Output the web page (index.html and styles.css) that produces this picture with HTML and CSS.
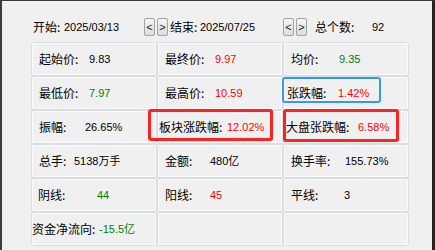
FILE: index.html
```html
<!DOCTYPE html>
<html lang="zh-CN">
<head>
<meta charset="utf-8">
<title>统计</title>
<link rel="stylesheet" href="styles.css">
</head>
<body>
<div class="win">
  <div class="bar">
    <div class="grp g1"><span class="lab lw-date">开始:</span><span class="val">2025/03/13</span></div>
    <div class="nav"><button class="btn">&lt;</button><button class="btn">&gt;</button></div>
    <div class="grp g2"><span class="lab lw-date2">结束:</span><span class="val">2025/07/25</span></div>
    <div class="nav"><button class="btn">&lt;</button><button class="btn">&gt;</button></div>
    <div class="grp g3"><span class="lab lw-count">总个数:</span><span class="val">92</span></div>
  </div>
  <div class="grid">
    <div class="cell"><span class="lab w50">起始价:</span><span class="val">9.83</span></div>
    <div class="cell"><span class="lab w50">最终价:</span><span class="val up">9.97</span></div>
    <div class="cell"><span class="lab w48">均价:</span><span class="val down">9.35</span></div>

    <div class="cell"><span class="lab w50">最低价:</span><span class="val down">7.97</span></div>
    <div class="cell"><span class="lab w50">最高价:</span><span class="val up">10.59</span></div>
    <div class="cell p3"><span class="lab w51">张跌幅:</span><span class="val up">1.42%</span><span class="hl hl-blue"></span></div>

    <div class="cell"><span class="lab w46">振幅:</span><span class="val">26.65%</span></div>
    <div class="cell p1"><span class="lab w68">板块涨跌幅:</span><span class="val up">12.02%</span><span class="hl hl-red hl-sector"></span></div>
    <div class="cell p2"><span class="lab w72">大盘张跌幅:</span><span class="val up">6.58%</span><span class="hl hl-red hl-market"></span></div>

    <div class="cell"><span class="lab w35">总手:</span><span class="val">5138万手</span></div>
    <div class="cell"><span class="lab w45">金额:</span><span class="val">480亿</span></div>
    <div class="cell"><span class="lab w54">换手率:</span><span class="val">155.73%</span></div>

    <div class="cell p6"><span class="lab w59">阴线:</span><span class="val down">44</span></div>
    <div class="cell"><span class="lab w45">阳线:</span><span class="val up">45</span></div>
    <div class="cell"><span class="lab w53">平线:</span><span class="val">3</span></div>

    <div class="cell p0"><span class="lab w67">资金净流向:</span><span class="val down">-15.5亿</span></div>
    <div class="cell"></div>
    <div class="cell"></div>
  </div>
</div>
</body>
</html>
```

FILE: styles.css
```css
* { box-sizing: border-box; }
html, body { margin: 0; padding: 0; }
body {
  width: 435px;
  height: 250px;
  overflow: hidden;
  background: #f0f0f0;
  font-family: "Noto Sans CJK SC", "Liberation Sans", sans-serif;
  font-size: 12px;
  color: #000;
}
.win {
  height: 250px;
  border-top: 1px solid #3a3a3a;
  border-left: 2px solid #3c3c3c;
  border-right: 3px solid #222;
  padding: 17px 0 0 29px;
}
.bar {
  display: flex;
  align-items: center;
  height: 18px;
}
.grp { display: flex; align-items: center; }
.g1 { width: 113px; padding-left: 2px; }
.g2 { width: 115px; padding-left: 2px; }
.g3 { padding-left: 8px; }
.lab { flex: none; white-space: nowrap; line-height: 16px; }
.lw-date { width: 31px; }
.lw-date2 { width: 30px; }
.lw-count { width: 57px; }
.val {
  font-family: "Liberation Sans", "Noto Sans CJK SC", sans-serif;
  font-size: 11px;
  line-height: 16px;
  white-space: nowrap;
  color: #000;
}
.up { color: #ff0000; }
.down { color: #008000; }
.nav { display: flex; gap: 2px; width: 24px; }
.btn {
  width: 11px;
  height: 18px;
  padding: 0;
  margin: 0;
  border: 1px solid #a3a3a3;
  border-radius: 2px;
  background: linear-gradient(#f4f4f4, #dedede);
  font-family: "Liberation Sans", sans-serif;
  font-size: 11px;
  line-height: 16px;
  color: #1a1a3a;
}
.grid {
  margin-top: 6px;
  display: grid;
  grid-template-columns: repeat(3, 126px);
  grid-auto-rows: 34px;
}
.cell {
  position: relative;
  display: flex;
  align-items: center;
  padding-left: 7px;
  border: 1px solid #d6dde4;
  border-radius: 2px;
  box-shadow: inset 1px 1px 0 #fbfbfb, inset -1px -1px 0 #fbfbfb;
}
.p0 { padding-left: 0; }
.p1 { padding-left: 1px; }
.p2 { padding-left: 2px; }
.p3 { padding-left: 3px; }
.p6 { padding-left: 6px; }
.w35 { width: 35px; }
.w45 { width: 45px; }
.w46 { width: 46px; }
.w48 { width: 48px; }
.w50 { width: 50px; }
.w51 { width: 51px; }
.w53 { width: 53px; }
.w54 { width: 54px; }
.w59 { width: 59px; }
.w67 { width: 67px; }
.w68 { width: 68px; }
.w72 { width: 72px; }
.hl {
  position: absolute;
  border-radius: 3px;
  pointer-events: none;
}
.hl-blue {
  left: -2px;
  top: 0;
  width: 99px;
  height: 26px;
  border: 2px solid #3399f3;
}
.hl-red { border: 3px solid #ff2222; }
.hl-sector { left: -10px; top: -2px; width: 125px; height: 32px; }
.hl-market { left: -1px; top: -2px; width: 116px; height: 33px; }
```
